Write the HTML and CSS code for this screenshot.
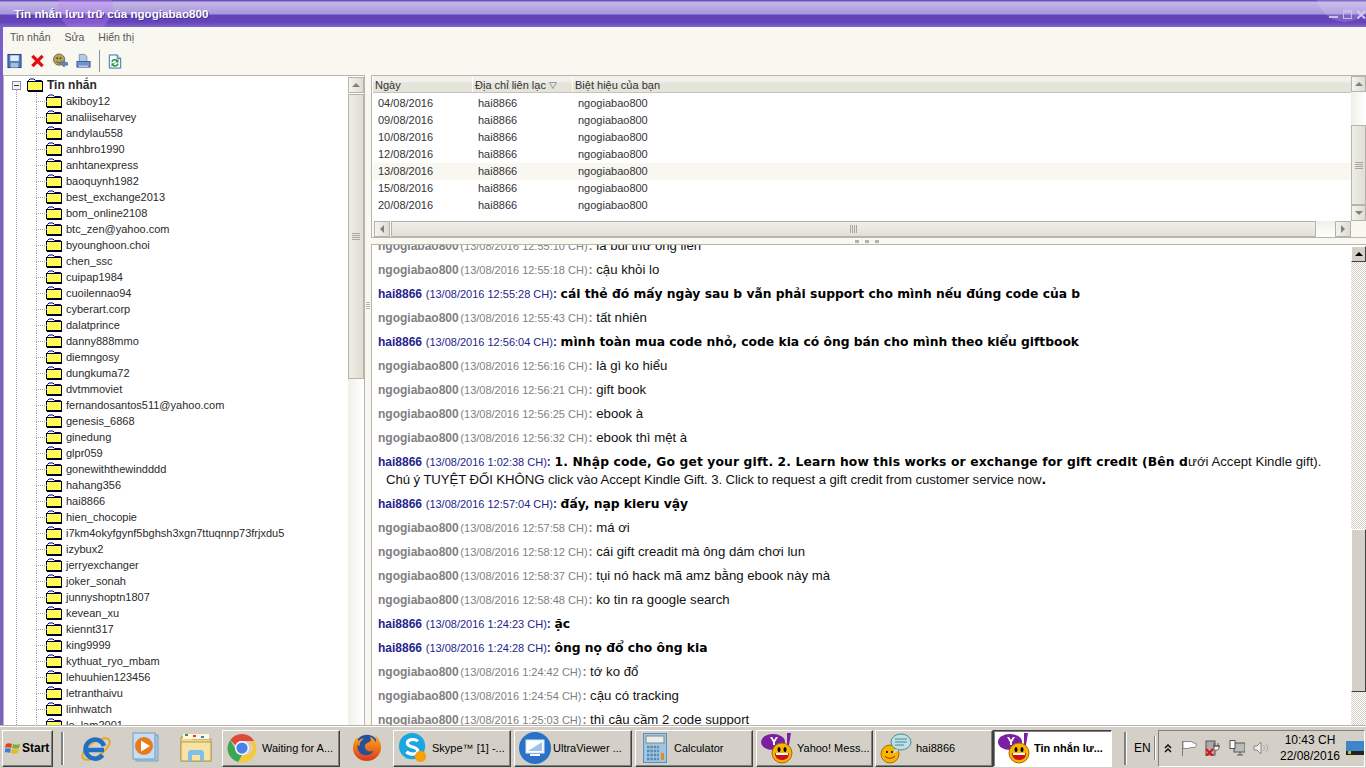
FILE: index.html
```html
<!DOCTYPE html>
<html lang="vi">
<head>
<meta charset="utf-8">
<title>Tin nhắn lưu trữ của ngogiabao800</title>
<link rel="stylesheet" href="styles.css">
</head>
<body>
<svg class="defs" width="0" height="0">
  <defs>
    <pattern id="dith" width="2" height="2" patternUnits="userSpaceOnUse"><rect width="2" height="2" fill="#ffff00"/><rect width="1" height="1" fill="#fff8a8"/><rect x="1" y="1" width="1" height="1" fill="#fff8a8"/></pattern>
    <linearGradient id="fox" x1="0" y1="0" x2="0" y2="1"><stop offset="0" stop-color="#f9c22e"/><stop offset=".5" stop-color="#f0791a"/><stop offset="1" stop-color="#d9381e"/></linearGradient>
    <symbol id="folder" viewBox="0 0 16 14"><path d="M1.500 3.500V2.500L3 1h4l1.500 1.500h6v2" fill="#fff" stroke="#000080"/><rect x="0.500" y="3.500" width="15" height="9" fill="url(#dith)" stroke="#000040"/><path d="M1 13.500h15M15.500 4v9" stroke="#000" fill="none"/></symbol>
    <symbol id="yahoo" viewBox="0 0 32 32"><ellipse cx="12" cy="10" rx="12" ry="8" fill="#7b1fa2"/><path d="M26 1l4 0-2 12-2 0z" fill="#7b1fa2"/><path d="M9 5h2l2 3 2-3h2l-3 5v3h-2v-3z" fill="#fff"/><circle cx="21" cy="21" r="10" fill="#f7b500" stroke="#a86a00"/><ellipse cx="18" cy="17.500" rx="1.500" ry="2.500" fill="#000"/><ellipse cx="24" cy="17.500" rx="1.500" ry="2.500" fill="#000"/><path d="M14 21h14c0 5-3 7-7 7s-7-2-7-7z" fill="#d01010"/><rect x="15" y="21" width="12" height="2" fill="#fff"/></symbol>
  </defs>
</svg>
<div class="screen">
  <div class="window">
    <header class="titlebar">
      <span class="swirl"></span>
      <span class="title-text">Tin nhắn lưu trữ của ngogiabao800</span>
      <span class="swirl-right"></span>
      <div class="winbtns">
        <svg width="37" height="14" viewBox="0 0 37 14"><rect x="0" y="7" width="9" height="2" fill="#c9bdea"/><rect x="14.500" y="1.500" width="8" height="8" fill="none" stroke="#c9bdea"/><rect x="14" y="1" width="9" height="2.500" fill="#c9bdea"/><path d="M28.500 2l7.500 7.500M36 2l-7.500 7.500" stroke="#d5cbef" stroke-width="2"/></svg>
      </div>
    </header>
    <nav class="menubar"><span>Tin nhắn</span><span>Sửa</span><span>Hiển thị</span></nav>
    <div class="toolbar">
      <svg class="tool" width="15" height="16" viewBox="0 0 16 16"><rect x="1" y="1" width="14" height="14" fill="#4f7fc0" stroke="#1c3f88"/><rect x="3.500" y="2" width="9" height="6" fill="#e8eef8"/><rect x="4" y="10" width="8" height="5" fill="#a8bcdc"/></svg>
      <svg class="tool" width="15" height="16" viewBox="0 0 16 16"><path d="M2.500 2.500l11 11M13.500 2.500l-11 11" stroke="#e01010" stroke-width="3.600"/></svg>
      <svg class="tool" width="15" height="16" viewBox="0 0 16 16"><circle cx="6.500" cy="6.500" r="6" fill="#b8a25a" stroke="#776a3a"/><circle cx="4.500" cy="5" r="1" fill="#444"/><circle cx="8" cy="5" r="1" fill="#444"/><path d="M3.500 8.500c1.500 2 4 2 5.500 0" stroke="#444" fill="none"/><path d="M8 11l4-3.500v2h3.500v3H12v2z" fill="#5f86bc" stroke="#3b5a92" stroke-width=".6"/></svg>
      <svg class="tool" width="15" height="16" viewBox="0 0 16 16"><path d="M3.500 1h6l2 2v6h-8z" fill="#b6c8e4" stroke="#7890bb"/><rect x="1" y="8.500" width="14" height="6" fill="#6f93cb" stroke="#3d5c96"/><rect x="3" y="13" width="10" height="1" fill="#eef"/></svg>
      <span class="tool-sep"></span>
      <svg class="tool" width="14" height="17" viewBox="0 0 16 18"><path d="M1.500 1.500h9l4 4v11h-13z" fill="#f4f8ff" stroke="#2c5aa8"/><path d="M10.500 1.500v4h4" fill="#cfdff5" stroke="#2c5aa8"/><path d="M4.500 9.500c.5-2.500 4-3.500 6-1.500" fill="none" stroke="#1e9a3a" stroke-width="1.800"/><path d="M12 6v4H8z" fill="#1e9a3a"/><path d="M11.500 11.500c-.5 2.500-4 3.500-6 1.500" fill="none" stroke="#1e9a3a" stroke-width="1.800"/><path d="M4 15v-4h4z" fill="#1e9a3a"/></svg>
    </div>
    <div class="panes">
      <section class="tree-pane">
        <div class="tree">
          <div class="tree-root"><span class="expander"></span><svg class="folder" width="16" height="14"><use href="#folder"/></svg><b>Tin nhắn</b></div>
          <ul class="tree-list">
            <li><svg class="folder" width="16" height="14"><use href="#folder"/></svg>akiboy12</li>
            <li><svg class="folder" width="16" height="14"><use href="#folder"/></svg>analiiseharvey</li>
            <li><svg class="folder" width="16" height="14"><use href="#folder"/></svg>andylau558</li>
            <li><svg class="folder" width="16" height="14"><use href="#folder"/></svg>anhbro1990</li>
            <li><svg class="folder" width="16" height="14"><use href="#folder"/></svg>anhtanexpress</li>
            <li><svg class="folder" width="16" height="14"><use href="#folder"/></svg>baoquynh1982</li>
            <li><svg class="folder" width="16" height="14"><use href="#folder"/></svg>best_exchange2013</li>
            <li><svg class="folder" width="16" height="14"><use href="#folder"/></svg>bom_online2108</li>
            <li><svg class="folder" width="16" height="14"><use href="#folder"/></svg>btc_zen@yahoo.com</li>
            <li><svg class="folder" width="16" height="14"><use href="#folder"/></svg>byounghoon.choi</li>
            <li><svg class="folder" width="16" height="14"><use href="#folder"/></svg>chen_ssc</li>
            <li><svg class="folder" width="16" height="14"><use href="#folder"/></svg>cuipap1984</li>
            <li><svg class="folder" width="16" height="14"><use href="#folder"/></svg>cuoilennao94</li>
            <li><svg class="folder" width="16" height="14"><use href="#folder"/></svg>cyberart.corp</li>
            <li><svg class="folder" width="16" height="14"><use href="#folder"/></svg>dalatprince</li>
            <li><svg class="folder" width="16" height="14"><use href="#folder"/></svg>danny888mmo</li>
            <li><svg class="folder" width="16" height="14"><use href="#folder"/></svg>diemngosy</li>
            <li><svg class="folder" width="16" height="14"><use href="#folder"/></svg>dungkuma72</li>
            <li><svg class="folder" width="16" height="14"><use href="#folder"/></svg>dvtmmoviet</li>
            <li><svg class="folder" width="16" height="14"><use href="#folder"/></svg>fernandosantos511@yahoo.com</li>
            <li><svg class="folder" width="16" height="14"><use href="#folder"/></svg>genesis_6868</li>
            <li><svg class="folder" width="16" height="14"><use href="#folder"/></svg>ginedung</li>
            <li><svg class="folder" width="16" height="14"><use href="#folder"/></svg>glpr059</li>
            <li><svg class="folder" width="16" height="14"><use href="#folder"/></svg>gonewiththewindddd</li>
            <li><svg class="folder" width="16" height="14"><use href="#folder"/></svg>hahang356</li>
            <li><svg class="folder" width="16" height="14"><use href="#folder"/></svg>hai8866</li>
            <li><svg class="folder" width="16" height="14"><use href="#folder"/></svg>hien_chocopie</li>
            <li><svg class="folder" width="16" height="14"><use href="#folder"/></svg>i7km4okyfgynf5bghsh3xgn7ttuqnnp73frjxdu5</li>
            <li><svg class="folder" width="16" height="14"><use href="#folder"/></svg>izybux2</li>
            <li><svg class="folder" width="16" height="14"><use href="#folder"/></svg>jerryexchanger</li>
            <li><svg class="folder" width="16" height="14"><use href="#folder"/></svg>joker_sonah</li>
            <li><svg class="folder" width="16" height="14"><use href="#folder"/></svg>junnyshoptn1807</li>
            <li><svg class="folder" width="16" height="14"><use href="#folder"/></svg>kevean_xu</li>
            <li><svg class="folder" width="16" height="14"><use href="#folder"/></svg>kiennt317</li>
            <li><svg class="folder" width="16" height="14"><use href="#folder"/></svg>king9999</li>
            <li><svg class="folder" width="16" height="14"><use href="#folder"/></svg>kythuat_ryo_mbam</li>
            <li><svg class="folder" width="16" height="14"><use href="#folder"/></svg>lehuuhien123456</li>
            <li><svg class="folder" width="16" height="14"><use href="#folder"/></svg>letranthaivu</li>
            <li><svg class="folder" width="16" height="14"><use href="#folder"/></svg>linhwatch</li>
            <li><svg class="folder" width="16" height="14"><use href="#folder"/></svg>lo_lam2001</li>
          </ul>
        </div>
        <div class="vscroll">
          <span class="sbtn"><i class="arrow-up"></i></span>
          <span class="thumb tree-thumb"><i class="grip"></i></span>
          <span class="track"></span>
        </div>
      </section>
      <div class="vsplit"><i class="vgrip"></i></div>
      <div class="right">
        <section class="list-pane">
          <div class="list-main">
            <div class="list-cols">
              <div class="list-head">
                <span class="col c1">Ngày</span>
                <span class="col c2">Địa chỉ liên lạc <svg width="8" height="7" viewBox="0 0 8 7"><path d="M.5.500h7L4 6.500z" fill="none" stroke="#999"/></svg></span>
                <span class="col c3">Biệt hiệu của bạn</span>
                <span class="col-fill"></span>
              </div>
              <div class="row"><span class="c1">04/08/2016</span><span class="c2">hai8866</span><span class="c3">ngogiabao800</span></div>
              <div class="row"><span class="c1">09/08/2016</span><span class="c2">hai8866</span><span class="c3">ngogiabao800</span></div>
              <div class="row"><span class="c1">10/08/2016</span><span class="c2">hai8866</span><span class="c3">ngogiabao800</span></div>
              <div class="row"><span class="c1">12/08/2016</span><span class="c2">hai8866</span><span class="c3">ngogiabao800</span></div>
              <div class="row selected"><span class="c1">13/08/2016</span><span class="c2">hai8866</span><span class="c3">ngogiabao800</span></div>
              <div class="row"><span class="c1">15/08/2016</span><span class="c2">hai8866</span><span class="c3">ngogiabao800</span></div>
              <div class="row"><span class="c1">20/08/2016</span><span class="c2">hai8866</span><span class="c3">ngogiabao800</span></div>
            </div>
            <div class="vscroll list-scroll">
              <span class="sbtn"><i class="arrow-up"></i></span>
              <span class="track list-track"></span>
              <span class="thumb list-thumb"><i class="grip"></i></span>
              <span class="sbtn"><i class="arrow-down"></i></span>
            </div>
          </div>
          <div class="hscroll">
            <span class="sbtn"><i class="arrow-left"></i></span>
            <span class="hthumb"><i class="hgrip"></i></span>
            <span class="htrack"></span>
            <span class="sbtn"><i class="arrow-right"></i></span>
          </div>
        </section>
        <div class="hsplit"><i></i><i></i><i></i></div>
        <section class="msg-pane">
          <div class="msgs">
            <p class="msg"><b class="me">ngogiabao800</b> <span class="me-time">(13/08/2016 12:55:10 CH)</span><b class="me">:</b> là bùi thư ông liền</p>
            <p class="msg"><b class="me">ngogiabao800</b> <span class="me-time">(13/08/2016 12:55:18 CH)</span><b class="me">:</b> cậu khỏi lo</p>
            <p class="msg"><b class="them">hai8866</b> <span class="them-time">(13/08/2016 12:55:28 CH)</span><b class="them">:</b> <strong>cái thẻ đó mấy ngày sau b vẫn phải support cho mình nếu đúng code của b</strong></p>
            <p class="msg"><b class="me">ngogiabao800</b> <span class="me-time">(13/08/2016 12:55:43 CH)</span><b class="me">:</b> tất nhiên</p>
            <p class="msg"><b class="them">hai8866</b> <span class="them-time">(13/08/2016 12:56:04 CH)</span><b class="them">:</b> <strong>mình toàn mua code nhỏ, code kia có ông bán cho mình theo kiểu giftbook</strong></p>
            <p class="msg"><b class="me">ngogiabao800</b> <span class="me-time">(13/08/2016 12:56:16 CH)</span><b class="me">:</b> là gì ko hiểu</p>
            <p class="msg"><b class="me">ngogiabao800</b> <span class="me-time">(13/08/2016 12:56:21 CH)</span><b class="me">:</b> gift book</p>
            <p class="msg"><b class="me">ngogiabao800</b> <span class="me-time">(13/08/2016 12:56:25 CH)</span><b class="me">:</b> ebook à</p>
            <p class="msg"><b class="me">ngogiabao800</b> <span class="me-time">(13/08/2016 12:56:32 CH)</span><b class="me">:</b> ebook thì mệt à</p>
            <p class="msg msg-long"><b class="them">hai8866</b> <span class="them-time">(13/08/2016 1:02:38 CH)</span><b class="them">:</b> <strong class="wide">1. Nhập code, Go get your gift. 2. Learn how this works or exchange for gift credit (Bên d</strong>ưới Accept Kindle gift).<span class="cont">Chú ý TUYỆT ĐỐI KHÔNG click vào Accept Kindle Gift. 3. Click to request a gift credit from customer service now<strong>.</strong></span></p>
            <p class="msg"><b class="them">hai8866</b> <span class="them-time">(13/08/2016 12:57:04 CH)</span><b class="them">:</b> <strong>đấy, nạp kieru vậy</strong></p>
            <p class="msg"><b class="me">ngogiabao800</b> <span class="me-time">(13/08/2016 12:57:58 CH)</span><b class="me">:</b> má ơi</p>
            <p class="msg"><b class="me">ngogiabao800</b> <span class="me-time">(13/08/2016 12:58:12 CH)</span><b class="me">:</b> cái gift creadit mà ông dám chơi lun</p>
            <p class="msg"><b class="me">ngogiabao800</b> <span class="me-time">(13/08/2016 12:58:37 CH)</span><b class="me">:</b> tụi nó hack mã amz bằng ebook này mà</p>
            <p class="msg"><b class="me">ngogiabao800</b> <span class="me-time">(13/08/2016 12:58:48 CH)</span><b class="me">:</b> ko tin ra google search</p>
            <p class="msg"><b class="them">hai8866</b> <span class="them-time">(13/08/2016 1:24:23 CH)</span><b class="them">:</b> <strong>ặc</strong></p>
            <p class="msg"><b class="them">hai8866</b> <span class="them-time">(13/08/2016 1:24:28 CH)</span><b class="them">:</b> <strong>ông nọ đổ cho ông kia</strong></p>
            <p class="msg"><b class="me">ngogiabao800</b> <span class="me-time">(13/08/2016 1:24:42 CH)</span><b class="me">:</b> tớ ko đổ</p>
            <p class="msg"><b class="me">ngogiabao800</b> <span class="me-time">(13/08/2016 1:24:54 CH)</span><b class="me">:</b> cậu có tracking</p>
            <p class="msg"><b class="me">ngogiabao800</b> <span class="me-time">(13/08/2016 1:25:03 CH)</span><b class="me">:</b> thì cậu cầm 2 code support</p>
          </div>
          <div class="vscroll msg-scroll">
            <span class="cbtn"><i class="arrow-black"></i></span>
            <span class="dither d1"></span>
            <span class="cthumb"></span>
            <span class="dither d2"></span>
          </div>
        </section>
      </div>
    </div>
  </div>
  <footer class="taskbar">
    <button class="task start">
      <svg width="17" height="15" viewBox="0 0 17 15"><path d="M1 3c2-1 4-1 6 0L6 7C4 6 2 6 0 7z" fill="#d8442a"/><path d="M8 3c2 1 5 1 7 0l-1 4c-2 1-5 1-7 0z" fill="#7ab32a"/><path d="M0 8c2-1 4-1 6 0l-1 4c-2-1-4-1-6 0z" fill="#3a7fd0"/><path d="M7 8c2 1 5 1 7 0l-1 4c-2 1-5 1-7 0z" fill="#eeb422"/></svg>
      <b>Start</b>
    </button>
    <span class="bar-sep"></span>
    <div class="quick">
      <svg width="32" height="32" viewBox="0 0 32 32"><ellipse cx="16" cy="17" rx="16" ry="7" transform="rotate(-35 16 17)" fill="none" stroke="#e8a820" stroke-width="2"/><path d="M7 18h17M24 14a9.500 9.500 0 1 0-1.500 9" fill="none" stroke="#1f6fc4" stroke-width="4.500"/></svg>
      <svg width="32" height="32" viewBox="0 0 32 32"><rect x="6" y="3" width="22" height="26" fill="#a8c6e2" stroke="#7aa2c8"/><rect x="3" y="1" width="22" height="26" fill="#c8def0" stroke="#6f9cc6"/><circle cx="14" cy="14" r="9" fill="#e87a1e"/><path d="M11 8.500L20 14l-9 5.500z" fill="#fff"/></svg>
      <svg width="32" height="32" viewBox="0 0 32 32"><path d="M1 5h9l2 2h19v22H1z" fill="#f2d88a" stroke="#b09a50"/><rect x="3" y="2" width="26" height="5" fill="#fff8e0"/><rect x="5" y="2" width="3" height="2" fill="#2ea02e"/><rect x="13" y="3" width="3" height="2" fill="#d8442a"/><rect x="21" y="4" width="3" height="2" fill="#2e80d8"/><path d="M1 10h30v19H1z" fill="#f7e4a4" stroke="#b09a50"/><path d="M8 29v-7c0-3 1-4 3-4h10c2 0 3 1 3 4v7h-4v-6h-8v6z" fill="#7ec0e8"/></svg>
    </div>
    <button class="task w-chrome">
      <svg width="30" height="30" viewBox="0 0 32 32"><path d="M16 1a15 15 0 0 1 13 7.500H16a7.500 7.500 0 0 0-7 4.500L3.500 7.500A15 15 0 0 1 16 1z" fill="#dd4a3a"/><path d="M3.500 7.500L9 17a7.500 7.500 0 0 0 7 6.500L12 31A15 15 0 0 1 3.500 7.500z" fill="#3ba655"/><path d="M29 8.500A15 15 0 0 1 12 31l6-8a7.500 7.500 0 0 0 4-14.500z" fill="#f6c935"/><circle cx="16" cy="16" r="7.500" fill="#fff"/><circle cx="16" cy="16" r="6" fill="#4a80e8"/></svg>
      <span class="task-label">Waiting for A...</span>
    </button>
    <div class="pinned">
      <svg width="30" height="30" viewBox="0 0 32 32"><circle cx="16" cy="16" r="13" fill="#274f9c"/><path d="M6 5C3 8 1 12 1 17c0 8 7 14 15 14s15-7 15-14c0-6-3-11-7-14 2 3 2 6 1 8-1-3-3-5-6-6 2 3 1 5-1 6-3 1-5 3-4 6 1 3 5 5 9 3-2 4-7 6-12 4-4-2-6-7-5-11 0 1 1 2 2 2 0-4 2-6 5-8-3 0-5 1-6 3-1-2-2-5-1-10z" fill="url(#fox)"/></svg>
    </div>
    <button class="task w-skype">
      <svg width="30" height="32" viewBox="0 0 32 32"><circle cx="15" cy="14" r="14" fill="#1aa6e0"/><path d="M21 9c-2-3-11-3-11 2 0 5 11 3 11 8 0 5-9 4-12 1" fill="none" stroke="#fff" stroke-width="3.400"/><circle cx="24" cy="25" r="6" fill="#f7a008"/></svg>
      <span class="task-label">Skype™ [1] -...</span>
    </button>
    <button class="task w-uv">
      <svg width="32" height="32" viewBox="0 0 32 32"><circle cx="16" cy="16" r="16" fill="#2a72c8"/><rect x="7" y="8" width="18" height="13" fill="#fff" stroke="#d6e6f8"/><path d="M9 19L23 10v9z" fill="#9cc4ea"/><rect x="11" y="22" width="10" height="2" fill="#fff"/></svg>
      <span class="task-label">UltraViewer ...</span>
    </button>
    <button class="task w-calc">
      <svg width="24" height="30" viewBox="0 0 24 30"><rect x=".5" y=".5" width="23" height="29" fill="#9cc6e8" stroke="#5f90bc"/><rect x="3" y="3" width="18" height="7" fill="#e9ecf0" stroke="#8a8a70"/><path d="M4 14h12M4 18h12M4 22h12M4 26h12" stroke="#5f87a8" stroke-width="2.400" stroke-dasharray="2.400 1"/><rect x="18" y="20" width="3" height="7" fill="#e88a20"/></svg>
      <span class="task-label">Calculator</span>
    </button>
    <button class="task w-yahoo">
      <svg width="32" height="32"><use href="#yahoo"/></svg>
      <span class="task-label">Yahoo! Mess...</span>
    </button>
    <button class="task w-chat">
      <svg width="32" height="32" viewBox="0 0 32 32"><circle cx="10" cy="22" r="9" fill="#f7b500" stroke="#a86a00"/><circle cx="7" cy="20" r="1" fill="#000"/><circle cx="12" cy="20" r="1" fill="#000"/><path d="M5 24c2 3 8 3 10 0" stroke="#a02000" fill="none"/><ellipse cx="21" cy="10" rx="10" ry="8" fill="#bfe0e4" stroke="#4a8a92"/><path d="M15 17l-2 5 6-4z" fill="#bfe0e4"/><path d="M15 7h12M15 10h12M15 13h9" stroke="#4a8a92"/></svg>
      <span class="task-label">hai8866</span>
    </button>
    <button class="task active w-active">
      <svg width="32" height="32"><use href="#yahoo"/></svg>
      <span class="task-label"><b>Tin nhắn lư...</b></span>
    </button>
    <span class="bar-sep sep2"></span>
    <span class="lang">EN</span>
    <span class="bar-sep sep3"></span>
    <div class="tray">
      <svg class="chev" width="8" height="9" viewBox="0 0 8 9"><path d="M1 4l3-3 3 3M1 8l3-3 3 3" fill="none" stroke="#111" stroke-width="1.500"/></svg>
      <svg class="tray-i" width="16" height="16" viewBox="0 0 16 16"><path d="M1.500 1v15" stroke="#777"/><path d="M2 1.500h8l6 3-2 3h-4l-3 1H2z" fill="#fff" stroke="#888"/></svg>
      <svg class="tray-i" width="16" height="16" viewBox="0 0 16 16"><rect x="1" y="1" width="9" height="14" fill="#aaa" stroke="#555"/><path d="M8 6h7M9 3v3M13 3v3M9 6h5v2c0 2-3 3-5 2z" fill="#fff" stroke="#555"/><path d="M1 9l7 7M8 9l-7 7" stroke="#e01010" stroke-width="2"/></svg>
      <svg class="tray-i" width="16" height="16" viewBox="0 0 16 16"><rect x="5" y="3" width="11" height="9" fill="#bbb" stroke="#555"/><rect x="1" y="0.500" width="5" height="8" fill="#fff" stroke="#555"/><path d="M8 15h6M11 12v3" stroke="#555"/></svg>
      <svg class="tray-i" width="16" height="16" viewBox="0 0 16 16"><path d="M1 6h3l4-4v12l-4-4H1z" fill="#eee" stroke="#888"/><path d="M10 5c2 2 2 4 0 6M12.500 3.500c3 3 3 6 0 9" fill="none" stroke="#aaa"/></svg>
      <div class="clock"><span>10:43 CH</span><span>22/08/2016</span></div>
      <svg class="show-desk" width="18" height="14" viewBox="0 0 18 14"><rect width="18" height="14" fill="#3f86c8"/><rect y="10" width="18" height="4" fill="#222"/><rect x="2" y="10" width="3" height="3" fill="#e0b030"/></svg>
    </div>
  </footer>
</div>
</body>
</html>
```
FILE: styles.css
```css
* { box-sizing: border-box; }
html, body { margin: 0; padding: 0; }
body { background: #f8f7f0; font-family: "Liberation Sans", Arial, sans-serif; font-size: 11px; color: #222; }
.defs { position: absolute; }
.screen { width: 1366px; height: 768px; display: flex; flex-direction: column; overflow: hidden; }
.window { flex: 1; min-height: 0; display: flex; flex-direction: column; border-left: 3px solid #7a5fc6; background: #f8f7f0; }

.titlebar { height: 27px; margin-left: -3px; flex: none; display: flex; align-items: center; padding-left: 14px; position: relative; overflow: hidden;
  background: linear-gradient(180deg, #6d4fc0 0, #6d4fc0 1px, #c4b8e6 2px, #a897dc 14px, #6444ba 15px, #6444ba 22px, #8066cb 27px); }
.swirl { position: absolute; left: 58px; top: -18px; width: 55px; height: 50px; border-radius: 50%; background: rgba(190,130,240,.35); }
.swirl-right { position: absolute; right: -10px; top: -50px; width: 62px; height: 72px; border-radius: 50%; background: rgba(220,210,245,.22); }
.title-text { position: relative; color: #fff; font-weight: bold; font-size: 11.600px; text-shadow: 1px 1px 0 #46308a; }
.winbtns { position: absolute; right: 0; top: 9px; height: 14px; display: flex; }
.menubar { height: 20px; flex: none; display: flex; align-items: center; padding-left: 7px; gap: 14px; font-size: 10.500px; color: #555; }
.toolbar { height: 28px; flex: none; display: flex; align-items: center; padding-left: 4px; gap: 8px; }
.tool { flex: none; }
.tool-sep { width: 1px; height: 22px; background: #8a9098; }

.panes { flex: 1; min-height: 0; display: flex; }
.tree-pane { width: 362px; flex: none; display: flex; border: 1px solid #b6b6ae; border-bottom: 0; background: #fff; overflow: hidden; }
.tree { flex: 1; min-width: 0; overflow: hidden; position: relative; padding: 1px 0 0 8px; line-height: 16px; color: #2a2a2a; }
.tree-root { height: 16px; display: flex; align-items: center; position: relative; font-size: 12px; }
.tree-root b { margin-left: 4px; }
.expander { width: 9px; height: 9px; border: 1px solid #8a8ab0; flex: none; margin-right: 6px; position: relative; background: #f4f4f0; }
.expander::after { content: ""; position: absolute; left: 1px; top: 3px; width: 5px; height: 1px; background: #333; }
.folder { flex: none; display: block; }
.tree-list { list-style: none; margin: 0; padding: 0 0 0 24px; position: relative; }
.tree-list::before { content: ""; position: absolute; left: 4px; top: -4px; bottom: 0; border-left: 1px dotted #9a9ac0; }
.tree-list li { height: 16px; display: flex; align-items: center; gap: 4px; padding-left: 10px; position: relative; white-space: nowrap; }
.tree-list li::before { content: ""; position: absolute; left: 0; top: 0; height: 8px; width: 10px; border-left: 1px dotted #a0a0a0; border-bottom: 1px dotted #a0a0a0; }
.tree-list li::after { content: ""; position: absolute; left: 0; top: 8px; height: 8px; border-left: 1px dotted #a0a0a0; }

.vscroll { width: 16px; flex: none; display: flex; flex-direction: column; background: #fff; }
.sbtn { width: 16px; height: 16px; flex: none; border: 1px solid #b4b4ac; background: linear-gradient(90deg, #f4f4ee, #dcdcd2); display: flex; align-items: center; justify-content: center; }
.tree-pane .vscroll { margin-top: 1px; }
.thumb { width: 16px; border: 1px solid #b4b4ac; background: linear-gradient(90deg, #eeeee6, #deded4); display: flex; align-items: center; justify-content: center; flex: none; }
.tree-thumb { height: 285px; margin-top: 1px; }
.track { flex: 1; background: linear-gradient(90deg, #f0f0ea, #fff); }
.grip { width: 8px; height: 7px; background: repeating-linear-gradient(180deg, #a8a8a0 0, #a8a8a0 1px, transparent 1px, transparent 2px); }
.arrow-up, .arrow-down, .arrow-left, .arrow-right, .arrow-black { display: block; width: 0; height: 0; border-style: solid; border-color: transparent; }
.arrow-up { border-width: 0 4px 4px; border-bottom-color: #808080; }
.arrow-down { border-width: 4px 4px 0; border-top-color: #808080; }
.arrow-left { border-width: 4px 4px 4px 0; border-right-color: #808080; }
.arrow-right { border-width: 4px 0 4px 4px; border-left-color: #808080; }
.arrow-black { border-width: 0 4px 4px; border-bottom-color: #000; }

.vsplit { width: 6px; flex: none; display: flex; align-items: center; padding-bottom: 20px; justify-content: center; }
.vgrip { width: 4px; height: 8px; margin-top: -168px; background: repeating-linear-gradient(180deg, #b4b4ac 0, #b4b4ac 1px, transparent 1px, transparent 2px); }
.right { flex: 1; min-width: 0; display: flex; flex-direction: column; }

.list-pane { height: 163px; flex: none; display: flex; flex-direction: column; border: 1px solid #b6b6ae; border-right: 0; background: #fff; }
.list-main { flex: 1; min-height: 0; display: flex; }
.list-cols { flex: 1; min-width: 0; padding-left: 1px; }
.list-head { height: 17px; display: flex; align-items: center; background: linear-gradient(180deg, #f2f2ec 0, #f0f0ea 40%, #e4e4da 41%, #e4e4da 100%); border-bottom: 1px solid #c4c4bc; }
.col { height: 16px; line-height: 18px; padding-left: 2px; border-right: 1px solid #fff; color: #333; flex: none; }
.col-fill { flex: 1; }
.col.c1, .row .c1 { width: 100px; }
.col.c2, .row .c2 { width: 100px; }
.col.c3 { width: 110px; border-right: 0; }
.row { height: 17px; line-height: 17px; display: flex; color: #333; }
.list-head + .row { margin-top: 2px; }
.row span { padding-left: 5px; flex: none; }
.row.selected { background: #f8f7f0; }
.list-scroll { width: 15px; }
.list-scroll .sbtn { width: 15px; }
.list-track { flex: none; height: 33px; background: linear-gradient(90deg, #f0f0ea, #fff); }
.list-thumb { width: 15px; height: 80px; flex: none; }
.hscroll { height: 16px; flex: none; display: flex; background: #f8f7f0; padding-left: 2px; padding-right: 15px; }
.hthumb { width: 925px; flex: none; margin-left: 1px; border: 1px solid #b4b4ac; background: linear-gradient(180deg, #f0f0ea, #e0e0d8); display: flex; align-items: center; justify-content: center; }
.hgrip { width: 8px; height: 8px; background: repeating-linear-gradient(90deg, #a8a8a0 0, #a8a8a0 1px, transparent 1px, transparent 2px); }
.htrack { flex: 1; background: linear-gradient(180deg, #f0f0ea, #fff); }

.hsplit { height: 6px; flex: none; display: flex; justify-content: center; align-items: center; gap: 6px; padding-right: 4px; }
.hsplit i { width: 4px; height: 3px; background: #b4b4ac; }

.msg-pane { flex: 1; min-height: 0; display: flex; border: 1px solid #b6b6ae; border-width: 1px 0 0 1px; background: #fff; overflow: hidden; }
.msgs { flex: 1; min-width: 0; overflow: hidden; padding-left: 6px; }
.msg { margin: 0; height: 24px; line-height: 24px; font-size: 13.200px; color: #111; white-space: nowrap; }
.msg b { font-size: 12px; }
.msg:first-child { margin-top: -11px; }
.msg-long { height: 42px; }
.cont { display: block; line-height: 18px; margin-top: -3px; padding-left: 8px; letter-spacing: -0.080px; }
.me { color: #808080; }
.me-time { color: #808080; font-size: 11px; margin: 0 1px 0 -2px; }
.them { color: #24248c; }
.them-time { color: #24248c; font-size: 11px; }
.msg strong { font-family: "DejaVu Sans", sans-serif; font-size: 12.300px; font-weight: bold; color: #000; }
.msg strong.wide { letter-spacing: 0.140px; }
.msg-scroll { width: 15px; padding-top: 1px; background: #fff; }
.cbtn { width: 15px; height: 16px; flex: none; background: #d4d0c8; border: 1px solid; border-color: #fff #404040 #404040 #fff; display: flex; align-items: center; justify-content: center; }
.dither { background: repeating-conic-gradient(#d4d0c8 0 25%, #fff 0 50%) 0 0 / 2px 2px; }
.d1 { flex: 1; }
.cthumb { height: 163px; flex: none; background: #d4d0c8; border: 1px solid; border-color: #fff #404040 #404040 #fff; }
.d2 { height: 33px; flex: none; }

.taskbar { height: 43px; flex: none; background: #d4d0c8; border-top: 1px solid #b8b4ac; box-shadow: inset 0 1px 0 #fff; display: flex; align-items: center; padding: 2px 2px 0 2px; gap: 2px; font-size: 11px; color: #000; }
.task { height: 37px; width: 118px; flex: none; padding: 0 0 0 4px; margin: 0; display: flex; align-items: center; gap: 4px; background: #d4d0c8; border: 1px solid; border-color: #fff #404040 #404040 #fff; box-shadow: inset -1px -1px 0 #808080; font: inherit; color: #000; text-align: left; }
.task svg { flex: none; }
.task-label { white-space: nowrap; overflow: hidden; font-size: 11px; }
.start { width: 51px; padding-left: 2px; gap: 0; font-size: 12px; }
.bar-sep { width: 2px; height: 33px; background: #808080; box-shadow: 1px 0 0 #fff; flex: none; margin: 0 6px 0 6px; }
.quick { display: flex; gap: 18px; padding-left: 9px; padding-right: 8px; flex: none; }
.w-chrome { padding-left: 4px; gap: 5px; }
.pinned { width: 30px; margin: 0 9px 0 10px; flex: none; }
.w-skype { padding-left: 4px; gap: 4px; }
.w-uv { margin-left: 1px; gap: 2px; }
.w-calc { margin-left: 1px; padding-left: 7px; gap: 7px; }
.w-yahoo { margin-left: 1px; width: 117px; }
.w-active { width: 119px; margin-left: -2px; padding-left: 4px; background: #fff; border-color: #404040 #fff #fff #404040; box-shadow: inset 1px 1px 0 #808080; }
.sep2 { margin: 0 6px 0 10px; }
.lang { font-size: 12px; width: 17px; flex: none; }
.sep3 { width: 1px; height: 24px; margin: 0 1px; }
.tray { flex: 1; height: 37px; display: flex; align-items: center; padding-left: 5px; border: 1px solid; border-color: #808080 #fff #fff #808080; }
.chev { margin-right: 9px; flex: none; }
.tray-i { margin-right: 8px; flex: none; }
.clock { display: flex; flex-direction: column; align-items: center; flex: none; width: 70px; margin-left: -2px; font-size: 12px; line-height: 16px; }
.show-desk { margin-left: 1px; flex: none; }
```
